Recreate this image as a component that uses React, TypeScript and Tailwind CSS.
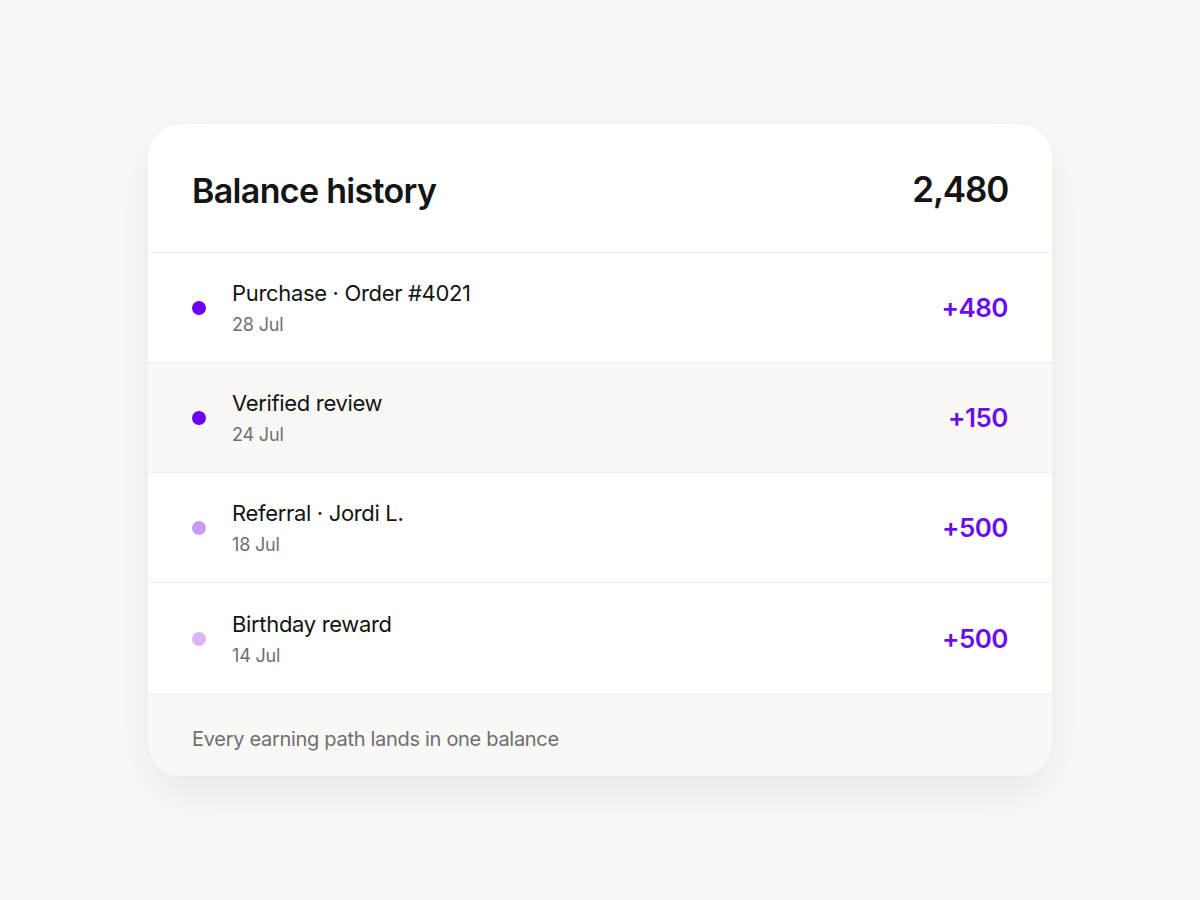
import React from "react";

const rows = [
  { title: "Purchase · Order #4021", date: "28 Jul", amount: "+480", dot: "bg-[#6b00f5]", bg: "bg-white" },
  { title: "Verified review", date: "24 Jul", amount: "+150", dot: "bg-[#6b00f5]", bg: "bg-[#f9f8f4]" },
  { title: "Referral · Jordi L.", date: "18 Jul", amount: "+500", dot: "bg-[#c69cf7]", bg: "bg-white" },
  { title: "Birthday reward", date: "14 Jul", amount: "+500", dot: "bg-[#d8b6f8]", bg: "bg-white" },
];

export default function App() {
  return (
    <div
      className="min-h-[900px] w-full bg-[#f9f8f4] flex items-start justify-center pt-[124px]"
      style={{ fontFamily: "Inter, 'Noto Sans', sans-serif" }}
    >
      <div className="w-[904px] rounded-[34px] bg-white overflow-hidden shadow-[0_18px_50px_rgba(0,0,0,0.07)]">
        <div className="h-[129px] border-b border-[#efede8] px-[44px] flex items-center justify-between">
          <h1 className="mt-[5px] text-[34px] font-semibold tracking-[-0.02em] text-[#141414] leading-none">Balance history</h1>
          <div className="mt-[3px] text-[35px] font-semibold tracking-[-0.035em] text-[#141414] leading-none">2,480</div>
        </div>
        {rows.map((r, i) => (
          <div
            key={i}
            className={`${r.bg} ${i === 3 ? "h-[112px]" : "h-[110px]"} border-b border-[#efede8] px-[44px] flex items-center`}
          >
            <div className={`w-[14px] h-[14px] rounded-full ${r.dot} shrink-0`} />
            <div className="ml-[26px] flex-1 flex flex-col">
              <div className="text-[22px] leading-[30px] tracking-[-0.015em] text-[#141414]">{r.title}</div>
              <div className="mt-[5px] text-[18px] leading-[24px] tracking-[-0.01em] text-[#6e6e76]">{r.date}</div>
            </div>
            <div className="text-[26px] font-semibold tracking-[-0.02em] text-[#6a0ef0] leading-none">{r.amount}</div>
          </div>
        ))}
        <div className="h-[81px] bg-[#f9f8f4] px-[44px] flex items-center">
          <div className="text-[20px] tracking-[-0.015em] text-[#6e6e76] mt-[6px]">Every earning path lands in one balance</div>
        </div>
      </div>
    </div>
  );
}
